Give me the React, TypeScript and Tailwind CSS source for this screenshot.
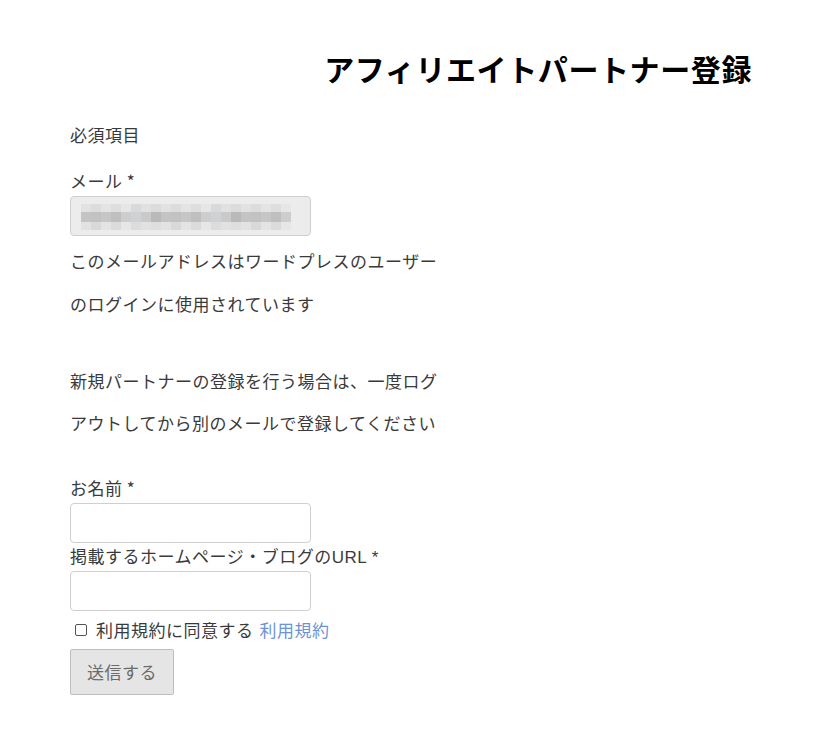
import React from "react";

const font = { fontFamily: '"Noto Sans CJK JP", "Noto Sans", sans-serif' };

function BlurredEmail() {
  // blurred-out email address
  const top = ["#e2e2e2", "#dcdcdc", "#e4e4e4", "#dedede", "#e6e6e6", "#d9d9d9", "#e1e1e1", "#dbdbdb"];
  const mid = ["#c4c4c4", "#bfbfbf", "#c9cacc", "#c2c2c2", "#cdcdcd", "#b9b9b9", "#c6c6c6", "#cfd1d4"];
  return (
    <div className="flex flex-col px-[10px] pt-[7px]">
      <div className="flex h-[8px]">
        {Array.from({ length: 21 }).map((_, i) => (
          <div key={i} className="w-[10px]" style={{ background: top[i % top.length] }} />
        ))}
      </div>
      <div className="flex h-[10px]">
        {Array.from({ length: 21 }).map((_, i) => (
          <div key={i} className="w-[10px]" style={{ background: mid[(i * 3) % mid.length] }} />
        ))}
      </div>
      <div className="flex h-[8px]">
        {Array.from({ length: 21 }).map((_, i) => (
          <div key={i} className="w-[10px]" style={{ background: top[(i * 5) % top.length] }} />
        ))}
      </div>
    </div>
  );
}

export default function App() {
  return (
    <div className="min-h-[745px] w-[833px] bg-white text-[#3a3a3a]" style={font}>
      <h1 className="flex justify-end pr-[81px] pt-[49px] text-[30px] font-bold leading-[38px] tracking-[0.6px] text-black">
        アフィリエイトパートナー登録
      </h1>

      <div className="flex flex-col pl-[70px] text-[17px] tracking-[0.5px]">
        <p className="mt-[36px] leading-[24px]">必須項目</p>

        <label className="mt-[22px] leading-[24px]">メール *</label>
        <div className="mt-[3px] h-[40px] w-[241px] rounded-[4px] border border-[#cfcfcf] bg-[#ececec]">
          <BlurredEmail />
        </div>

        <p className="mt-[13px] leading-[24px]">このメールアドレスはワードプレスのユーザー</p>
        <p className="mt-[19px] leading-[24px]">のログインに使用されています</p>
        <div className="h-[53px]" />
        <p className="leading-[24px]">新規パートナーの登録を行う場合は、一度ログ</p>
        <p className="mt-[18px] leading-[24px]">アウトしてから別のメールで登録してください</p>

        <label className="mt-[41px] leading-[24px]">お名前 *</label>
        <div className="mt-[3px] h-[40px] w-[241px] rounded-[4px] border border-[#cfcfcf] bg-white" />

        <label className="mt-[1px] leading-[24px]">
          掲載するホームページ・ブログの
          <span style={{ fontFamily: '"Liberation Sans", sans-serif' }}>URL *</span>
        </label>
        <div className="mt-[1px] h-[40px] w-[241px] rounded-[4px] border border-[#cfcfcf] bg-white" />

        <div className="mt-[7px] flex items-center leading-[24px]">
          <span className="ml-[5px] h-[12px] w-[12px] rounded-[2px] border border-[#555] bg-white" />
          <span className="ml-[9px]">利用規約に同意する</span>
          <span className="ml-[6px] text-[#6b93d6]">利用規約</span>
        </div>

        <button className="mt-[7px] h-[46px] w-[104px] rounded-[2px] border border-[#bdbdbd] bg-[#e5e5e5] text-[17px] text-[#6b6b6b]">
          送信する
        </button>
      </div>
    </div>
  );
}
